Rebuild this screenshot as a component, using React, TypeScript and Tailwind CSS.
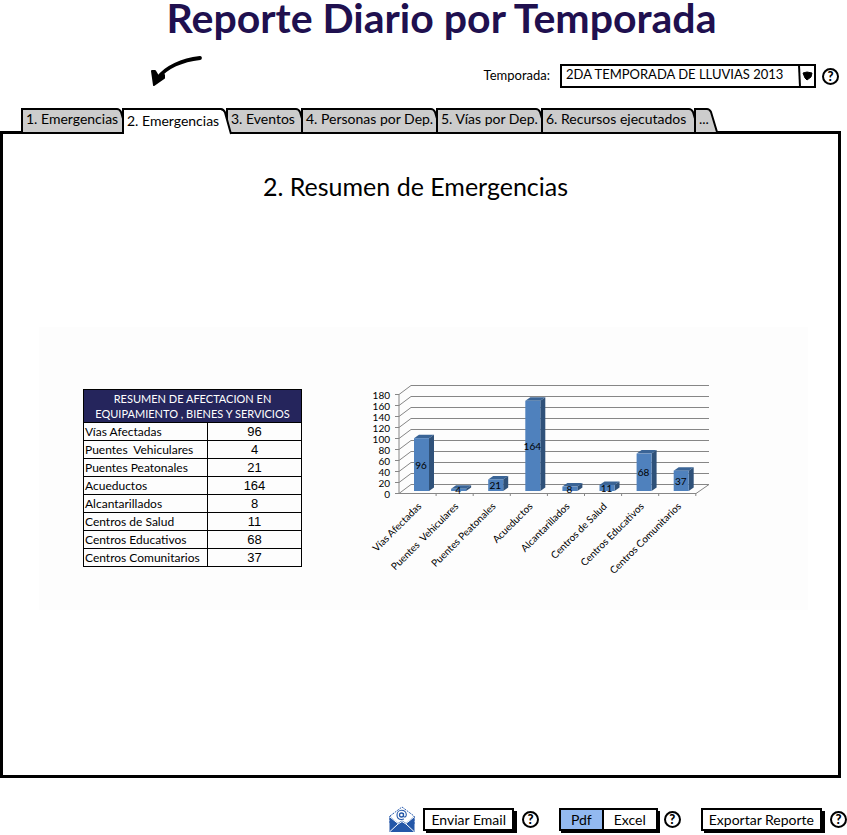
import { Fragment } from "react";

const tabs = [
  { label: "1. Emergencias", width: "w-[107px]" },
  { label: "2. Emergencias", width: "w-[110px]" },
  { label: "3. Eventos", width: "w-[81px]" },
  { label: "4. Personas por Dep.", width: "w-[141px]" },
  { label: "5. Vías por Dep.", width: "w-[111px]" },
  { label: "6. Recursos ejecutados", width: "w-[159px]" },
  { label: "...", width: "w-[24px]" },
];

const rows = [
  { name: "Vías Afectadas", value: 96 },
  { name: "Puentes  Vehiculares", value: 4 },
  { name: "Puentes Peatonales", value: 21 },
  { name: "Acueductos", value: 164 },
  { name: "Alcantarillados", value: 8 },
  { name: "Centros de Salud", value: 11 },
  { name: "Centros Educativos", value: 68 },
  { name: "Centros Comunitarios", value: 37 },
];

const ticks = [0, 20, 40, 60, 80, 100, 120, 140, 160, 180];

function Help() {
  return (
    <button
      type="button"
      aria-label="Ayuda"
      className="flex size-[17px] shrink-0 items-center justify-center rounded-full border-2 border-black text-[13px] leading-none font-black"
    >
      ?
    </button>
  );
}

function Tab({ label, width, active }: { label: string; width: string; active: boolean }) {
  return (
    <button
      type="button"
      role="tab"
      aria-selected={active}
      className={`-mr-1.5 flex shrink-0 ${width} ${active ? "relative z-10 h-[26px]" : "h-6"}`}
    >
      <span
        className={`flex h-full min-w-0 flex-1 items-center border-t-2 border-l-2 border-black pl-[3px] whitespace-nowrap ${
          active ? "bg-white pb-1" : "bg-[#cccccc] pb-1.5"
        }`}
      >
        <span className="relative z-10">{label}</span>
      </span>
      <svg viewBox="0 0 11 24" preserveAspectRatio="none" className="h-full w-[11px] shrink-0 overflow-visible" aria-hidden="true">
        <path d="M0 1C2 1 3 2 4 4L10 24H0Z" fill={active ? "#ffffff" : "#cccccc"} />
        <path d="M0 1C2 1 3 2 4 4L10 24" fill="none" stroke="#000" strokeWidth="2" />
      </svg>
    </button>
  );
}

function SketchArrow() {
  return (
    <svg viewBox="0 0 54 33" className="h-[33px] w-[54px] shrink-0" aria-hidden="true">
      <path d="M50 4C32 6 16 13 8 24" fill="none" stroke="#000" strokeWidth="3.8" strokeLinecap="round" />
      <path d="M2 17L4 31L14 24L14 21L8 22L5 17Z" fill="#000" stroke="#000" strokeWidth="2" strokeLinejoin="round" />
    </svg>
  );
}

function MailIcon() {
  return (
    <svg viewBox="0 0 26 27" className="h-[27px] w-[26px] shrink-0" aria-hidden="true">
      <path d="M1 10L13 1L25 10V18H1Z" fill="#fff" stroke="#2a5db0" strokeWidth="1" strokeDasharray="2 1" />
      <path d="M0.5 10L9 17L13 14.5L17 17L25.5 10V26H0.5Z" fill="#2457a8" />
      <path d="M1 25.5L9 18L13 15.5L17 18L25 25.5M1 11L9 17.5M25 11L17 17.5" fill="none" stroke="#fff" strokeWidth="1" />
      <circle cx="12.5" cy="9" r="2" fill="none" stroke="#2457a8" strokeWidth="1.3" />
      <path d="M14.5 7V10C15 12 17.5 11 17.3 8.5C17 5.5 15 4.3 12.5 4.3C10 4.3 8 6.3 8 9C8 12 10 13.5 12.5 13.5L15 13" fill="none" stroke="#2457a8" strokeWidth="1.1" />
    </svg>
  );
}

function BarChart() {
  const base = 112;
  return (
    <svg viewBox="0 0 350 200" className="h-[200px] w-[350px] shrink-0" role="img" aria-label="Resumen de afectación">
      {ticks.map((t) => {
        const y = 114.5 - t * 0.55;
        return (
          <g key={t}>
            <path d={`M30 ${y}H34L46 ${y - 9}H344`} fill="none" stroke="#868686" strokeWidth="1" />
            <text x="25" y={y + 4} textAnchor="end" fontSize="10">
              {t}
            </text>
          </g>
        );
      })}
      <path d="M34 15.5V114.5H331L344 105.5" fill="none" stroke="#868686" strokeWidth="1" />
      {rows.map((r, i) => {
        const x = 49 + i * 37.1;
        const h = r.value * 0.55;
        const top = base - h;
        return (
          <Fragment key={r.name}>
            <path d={`M${34 + (i + 1) * 37.1} 114v3`} stroke="#868686" />
            <path d={`M${x} ${top}l5 -3.5h15l-5 3.5Z`} fill="#3a6496" />
            <path d={`M${x + 15} ${top}l5 -3.5v${h}l-5 3.5Z`} fill="#2f5179" />
            <rect x={x} y={top} width="15" height={h} fill="#4f81bd" />
            <text x={x + 7} y={base - h / 2 + 4} textAnchor="middle" fontSize="10">
              {r.value}
            </text>
            <text
              transform={`translate(${x + 8} 128) rotate(-45)`}
              textAnchor="end"
              fontSize="10"
              style={{ whiteSpace: "pre" }}
            >
              {r.name}
            </text>
          </Fragment>
        );
      })}
    </svg>
  );
}

function SketchButton({ children }: { children: string }) {
  return (
    <button
      type="button"
      className="h-[23px] shrink-0 border-2 border-black bg-white px-1.5 leading-none whitespace-nowrap shadow-[3px_3px_0_#000]"
    >
      {children}
    </button>
  );
}

export default function App() {
  return (
    <div className="bg-white font-[Lato,'Open_Sans',sans-serif] text-[14px] text-black">
      <h1 className="pl-9 text-center text-[41px] leading-9 font-bold text-[#20104f]">
        Reporte Diario por Temporada
      </h1>

      <div className="mt-[18px] flex items-start pr-2 pl-[150px]">
        <SketchArrow />
        <div className="mt-2.5 ml-auto flex items-center">
          <label htmlFor="temporada" className="mr-2.5 text-[13px]">
            Temporada:
          </label>
          <div className="relative mr-1.5 w-64">
            <select
              id="temporada"
              className="block h-6 w-full appearance-none border-2 border-black bg-white pr-5 pb-[3px] pl-1 text-[13px] leading-none"
            >
              <option>2DA TEMPORADA DE LLUVIAS 2013</option>
            </select>
            <svg viewBox="0 0 18 24" className="pointer-events-none absolute top-0 right-0 h-6 w-[18px]" aria-hidden="true">
              <path d="M1 1L2 23" stroke="#000" strokeWidth="2" />
              <path d="M5 9L9 8L14 9L13 13L9 16L7 14Z" fill="#000" stroke="#000" strokeLinejoin="round" />
            </svg>
          </div>
          <Help />
        </div>
      </div>

      <div role="tablist" className="mt-5 flex h-[23px] pl-[21px] text-[14px]">
        {tabs.map((t, i) => (
          <Tab key={t.label} label={t.label} width={t.width} active={i === 1} />
        ))}
      </div>

      <main className="mr-1.5 border-[3px] border-black pt-9 pr-[30px] pb-[165px] pl-9">
        <h2 className="pr-4 text-center text-[25px] leading-8">2. Resumen de Emergencias</h2>
        <div className="mt-[125px] flex items-start gap-[63px] bg-[#fdfdfd] pb-[31px] pl-11">
          <table className="mt-[62px] w-[219px] shrink-0 table-fixed border-collapse">
            <colgroup>
              <col className="w-[124px]" />
              <col />
            </colgroup>
            <thead>
              <tr className="h-[33px]">
                <th
                  colSpan={2}
                  className="border border-black bg-[#25255c] p-0 text-[11px] leading-[15px] font-normal text-white"
                >
                  RESUMEN DE AFECTACION EN
                  <br />
                  EQUIPAMIENTO , BIENES Y SERVICIOS
                </th>
              </tr>
            </thead>
            <tbody>
              {rows.map((r) => (
                <tr key={r.name}>
                  <td className="border border-black p-0 pl-px text-[12px] leading-[17px] whitespace-pre">{r.name}</td>
                  <td className="border border-black p-0 text-center font-['Liberation_Sans',sans-serif] text-[13px] leading-[17px]">
                    {r.value}
                  </td>
                </tr>
              ))}
            </tbody>
          </table>
          <div className="mt-[52px]">
            <BarChart />
          </div>
        </div>
      </main>

      <footer className="mt-7 flex items-center justify-end">
        <MailIcon />
        <div className="ml-2 flex items-center gap-2">
          <SketchButton>Enviar Email</SketchButton>
          <Help />
        </div>
        <div className="ml-5 flex items-center gap-1.5">
          <div className="flex h-[23px] border-2 border-black shadow-[2px_3px_0_#000]">
            <button type="button" className="border-r-2 border-black bg-[#93b9f0] px-2.5 leading-none">
              Pdf
            </button>
            <button type="button" className="bg-white px-2.5 leading-none">
              Excel
            </button>
          </div>
          <Help />
        </div>
        <div className="ml-5 flex items-center gap-2">
          <SketchButton>Exportar Reporte</SketchButton>
          <Help />
        </div>
      </footer>
    </div>
  );
}
